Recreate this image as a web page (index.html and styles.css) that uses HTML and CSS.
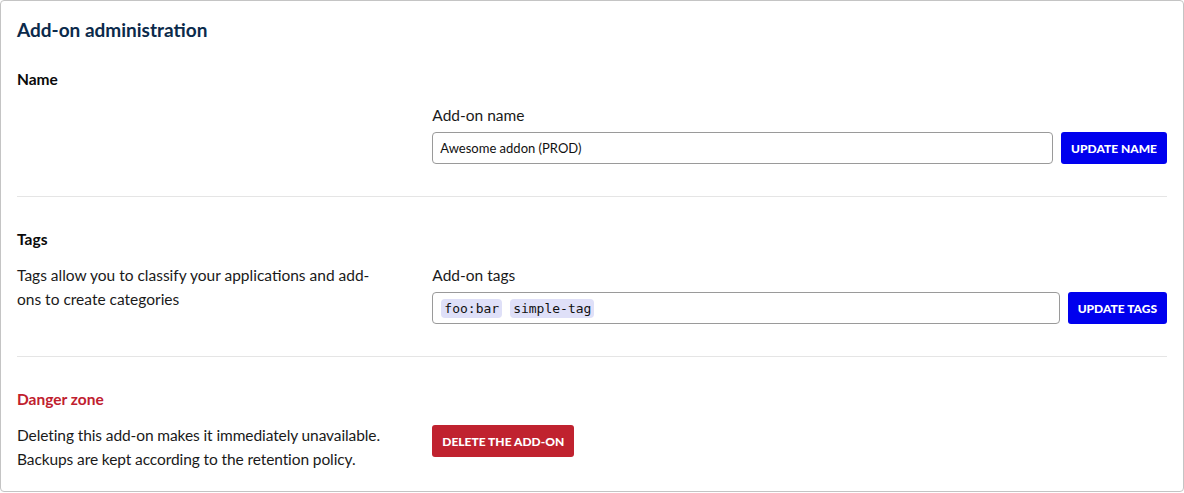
FILE: index.html
```html
<!DOCTYPE html>
<html lang="en">
<head>
<meta charset="utf-8">
<title>Add-on administration</title>
<link rel="stylesheet" href="styles.css">
</head>
<body>
<div class="card">
  <h1 class="card-title">Add-on administration</h1>

  <section class="section">
    <h2 class="section-title">Name</h2>
    <div class="section-grid">
      <div class="section-desc"></div>
      <div class="field">
        <label class="field-label" for="addon-name">Add-on name</label>
        <div class="field-row">
          <input class="text-input" id="addon-name" type="text" value="Awesome addon (PROD)">
          <button class="btn btn-primary" type="button">Update name</button>
        </div>
      </div>
    </div>
  </section>

  <hr class="separator">

  <section class="section">
    <h2 class="section-title">Tags</h2>
    <div class="section-grid">
      <p class="section-desc">Tags allow you to classify your applications and add-ons to create categories</p>
      <div class="field">
        <div class="field-label">Add-on tags</div>
        <div class="field-row">
          <div class="tags-input">
            <span class="tag">foo:bar</span>
            <span class="tag">simple-tag</span>
          </div>
          <button class="btn btn-primary" type="button">Update tags</button>
        </div>
      </div>
    </div>
  </section>

  <hr class="separator">

  <section class="section">
    <h2 class="section-title danger">Danger zone</h2>
    <div class="section-grid">
      <p class="section-desc nowrap">Deleting this add-on makes it immediately unavailable.<br>Backups are kept according to the retention policy.</p>
      <div class="field">
        <div class="field-row danger-row">
          <button class="btn btn-danger" type="button">Delete the add-on</button>
        </div>
      </div>
    </div>
  </section>
</div>
</body>
</html>
```

FILE: styles.css
```css
* {
  box-sizing: border-box;
}

html, body {
  margin: 0;
  padding: 0;
  background: #ffffff;
}

body {
  font-family: Lato, "Noto Sans", "Liberation Sans", sans-serif;
  font-size: 15.5px;
  color: #111111;
}

.card {
  width: 1184px;
  height: 492px;
  border: 1px solid #c4c4c4;
  border-radius: 4px;
  padding: 16px 16px 16px 16px;
}

.card-title {
  margin: 0;
  font-size: 19px;
  line-height: 26px;
  font-weight: 700;
  color: #0b2a4b;
}

.section-title {
  margin: 0 0 12px 0;
  font-size: 15.5px;
  line-height: 24px;
  font-weight: 700;
  color: #0a0a0a;
}

.card-title + .section {
  margin-top: 24px;
}

.section-title.danger {
  color: #c0202e;
}

.section-grid {
  display: grid;
  grid-template-columns: 1fr 2fr;
  column-gap: 48px;
}

.section-desc {
  margin: 0;
  line-height: 24px;
  color: #1a1a1a;
}

.section-desc.nowrap {
  white-space: nowrap;
  letter-spacing: -0.1px;
}

.field {
  display: flex;
  flex-direction: column;
}

.field-label {
  line-height: 24px;
  margin-bottom: 5px;
  color: #1a1a1a;
}

.field-row {
  display: flex;
  gap: 8px;
  align-items: stretch;
}

.danger-row {
  padding-top: 2px;
}

.text-input {
  flex: 1;
  height: 32px;
  border: 1px solid #9a9a9a;
  border-radius: 4px;
  padding: 0 7px;
  font-family: Lato, "Noto Sans", "Liberation Sans", sans-serif;
  font-size: 13px;
  color: #111111;
  background: #ffffff;
}

.tags-input {
  flex: 1;
  height: 32px;
  border: 1px solid #9a9a9a;
  border-radius: 4px;
  padding: 0 8px;
  display: flex;
  align-items: center;
  gap: 8px;
}

.tag {
  font-family: "DejaVu Sans Mono", "Liberation Mono", monospace;
  font-size: 13px;
  line-height: 19px;
  padding: 0 3px;
  background: #dfe0f8;
  border-radius: 4px;
  color: #111111;
}

.btn {
  height: 32px;
  border: none;
  border-radius: 3px;
  padding: 0 10px;
  font-family: Lato, "Noto Sans", "Liberation Sans", sans-serif;
  font-size: 12px;
  font-weight: 900;
  text-transform: uppercase;
  color: #ffffff;
  white-space: nowrap;
  cursor: pointer;
}

.btn-primary {
  background: #0000ee;
}

.btn-danger {
  background: #c0222f;
}

.separator {
  border: none;
  border-top: 1px solid #e5e5e5;
  margin: 32px 0 30px 0;
}
```
